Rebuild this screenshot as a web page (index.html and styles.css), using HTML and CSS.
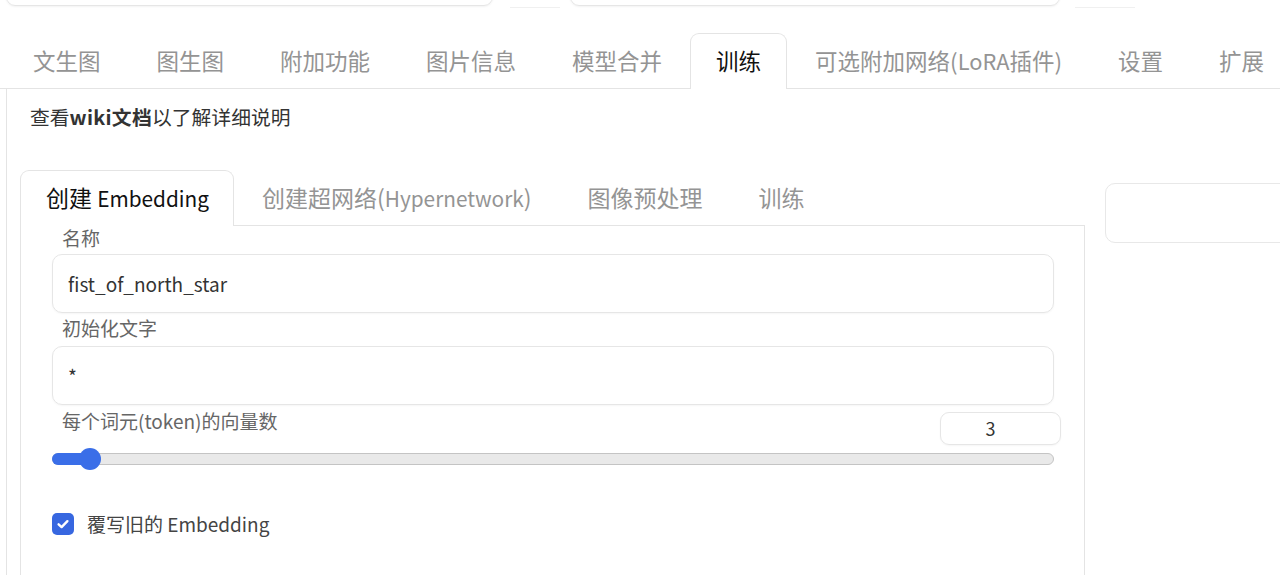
FILE: index.html
```html
<!DOCTYPE html>
<html lang="zh-CN">
<head>
<meta charset="utf-8">
<title>训练</title>
<link rel="stylesheet" href="styles.css">
</head>
<body>
<div class="page">
  <div class="topbar">
    <div class="tb-box tb-box1"></div>
    <div class="tb-line tb-line1"></div>
    <div class="tb-box tb-box2"></div>
    <div class="tb-line tb-line2"></div>
  </div>

  <div class="tabs">
    <div class="tab">文生图</div>
    <div class="tab">图生图</div>
    <div class="tab">附加功能</div>
    <div class="tab">图片信息</div>
    <div class="tab">模型合并</div>
    <div class="tab active">训练</div>
    <div class="tab">可选附加网络(<span class="lat">LoRA</span>插件)</div>
    <div class="tab">设置</div>
    <div class="tab">扩展</div>
  </div>

  <div class="panel">
    <p class="note">查看<b>wiki文档</b>以了解详细说明</p>

    <div class="main">
      <div class="left">
        <div class="subtabs">
          <div class="subtab active">创建 <span class="lat">Embedding</span></div>
          <div class="subtab">创建超网络(<span class="lat">Hypernetwork</span>)</div>
          <div class="subtab">图像预处理</div>
          <div class="subtab">训练</div>
        </div>
        <div class="subpanel">
          <div class="label">名称</div>
          <div class="input">fist_of_north_star</div>

          <div class="label label-gap">初始化文字</div>
          <div class="input input-gap">*</div>

          <div class="num-row">
            <div class="label num-label">每个词元(token)的向量数</div>
            <div class="num-box">3</div>
          </div>
          <div class="slider">
            <div class="slider-fill" style="width: 37px"></div>
            <div class="slider-thumb" style="left: 26px"></div>
          </div>

          <div class="check-row">
            <span class="checkbox">
              <svg viewBox="0 0 16 16" width="16" height="16"><path d="M3.6 8.3 6.6 11.1 12.4 5.2" fill="none" stroke="#fff" stroke-width="2.4" stroke-linecap="round" stroke-linejoin="round"/></svg>
            </span>
            <span class="check-label">覆写旧的 Embedding</span>
          </div>
        </div>
      </div>
      <div class="right">
        <div class="right-box"></div>
      </div>
    </div>
  </div>
</div>
</body>
</html>
```

FILE: styles.css
```css
* { box-sizing: border-box; }

html, body {
  margin: 0;
  padding: 0;
  background: #ffffff;
  overflow: hidden;
}

body {
  font-family: "Noto Sans CJK SC", "Noto Sans", sans-serif;
  color: #333;
  width: 1280px;
  height: 575px;
}

.page {
  width: 1280px;
  height: 575px;
  overflow: hidden;
}

/* top strip: bottoms of the boxes above */
.topbar {
  height: 8px;
  display: flex;
  align-items: flex-end;
  overflow: hidden;
}

.tb-box {
  height: 40px;
  border: 1px solid #e6e6e6;
  border-radius: 9px;
  margin-bottom: 2px;
  box-shadow: 0 1px 2px rgba(0,0,0,0.05);
}

.tb-box1 { margin-left: 6px; width: 487px; }
.tb-box2 { margin-left: 10px; width: 490px; }

.tb-line {
  height: 1px;
  background: #f0f0f0;
}
.tb-line1 { margin-left: 17px; width: 50px; }
.tb-line2 { margin-left: 15px; width: 60px; }

/* main tabs */
.tabs {
  display: flex;
  align-items: flex-end;
  height: 81px;
  padding-left: 5px;
  border-bottom: 1px solid #e4e4e4;
}

.tab {
  height: 56px;
  margin-bottom: -1px;
  padding: 0 27px;
  font-size: 22.5px;
  line-height: 52px;
  color: #949494;
  border: 1px solid transparent;
  border-bottom: none;
  white-space: nowrap;
}

.tab .lat {
  font-size: 21.8px;
}

.tab.active {
  color: #111;
  background: #fff;
  border-color: #e4e4e4;
  border-radius: 9px 9px 0 0;
  padding: 0 25px;
}

/* panel */
.panel {
  margin-left: 6px;
  border-left: 1px solid #e4e4e4;
  padding: 15px 0 0 13px;
  height: 500px;
}

.note {
  margin: 0;
  padding-left: 10px;
  font-size: 19.8px;
  line-height: 26px;
  color: #333;
}

.note b {
  font-weight: 700;
  letter-spacing: 0.3px;
}

.main {
  display: flex;
  gap: 20px;
  margin-top: 40px;
}

.left {
  width: 1065px;
  flex: none;
}

.right {
  flex: 1;
  padding-top: 13px;
  margin-right: -30px;
}

.right-box {
  height: 60px;
  border: 1px solid #e8e8e8;
  border-radius: 10px;
}

/* sub tabs */
.subtabs {
  display: flex;
  align-items: flex-end;
  height: 56px;
  border-bottom: 1px solid #e4e4e4;
}

.subtab {
  height: 56px;
  margin-bottom: -1px;
  padding: 0 27px;
  font-size: 23px;
  line-height: 52px;
  color: #949494;
  border: 1px solid transparent;
  border-bottom: none;
  white-space: nowrap;
}

.subtab .lat {
  font-size: 20.8px;
}

.subtab.active {
  color: #111;
  background: #fff;
  border-color: #e4e4e4;
  border-radius: 9px 9px 0 0;
  padding: 0 24px 0 25px;
}

.subpanel {
  border-left: 1px solid #e4e4e4;
  border-right: 1px solid #e4e4e4;
  padding: 0 30px 0 31px;
  height: 400px;
}

.label {
  font-size: 19px;
  line-height: 24px;
  color: #666;
  padding-left: 10px;
}

.label-gap { margin-top: 3px; }

.input {
  margin-top: 4px;
  height: 59px;
  border: 1px solid #e6e6e6;
  border-radius: 10px;
  padding-left: 15px;
  font-size: 19px;
  line-height: 57px;
  color: #333;
  box-shadow: 0 1px 2px rgba(0,0,0,0.04);
}

.input-gap { margin-top: 6px; }

.num-row {
  display: flex;
  justify-content: space-between;
  align-items: flex-start;
  margin-top: 3px;
  margin-right: -7px;
}

.num-label {
  padding-top: 1px;
}

.num-box {
  margin-top: 4px;
  width: 121px;
  height: 33px;
  border: 1px solid #e6e6e6;
  border-radius: 9px;
  padding-right: 20px;
  text-align: center;
  font-size: 18px;
  line-height: 31px;
  color: #333;
  box-shadow: 0 1px 2px rgba(0,0,0,0.04);
}

.slider {
  position: relative;
  margin-top: 8px;
  height: 12px;
  background: #e9e9e9;
  border: 1px solid #c4c4c4;
  border-radius: 6px;
}

.slider-fill {
  position: absolute;
  left: -1px;
  top: -1px;
  height: 12px;
  background: #3a6ee8;
  border-radius: 6px 0 0 6px;
}

.slider-thumb {
  position: absolute;
  top: -6px;
  width: 22px;
  height: 22px;
  border-radius: 50%;
  background: #3a6ee8;
}

.check-row {
  display: flex;
  align-items: center;
  margin-top: 47px;
}

.checkbox {
  width: 22px;
  height: 22px;
  border-radius: 5px;
  background: #3767e0;
  display: flex;
  align-items: center;
  justify-content: center;
}

.check-label {
  margin-left: 13px;
  font-size: 19px;
  line-height: 24px;
  color: #444;
}
```
